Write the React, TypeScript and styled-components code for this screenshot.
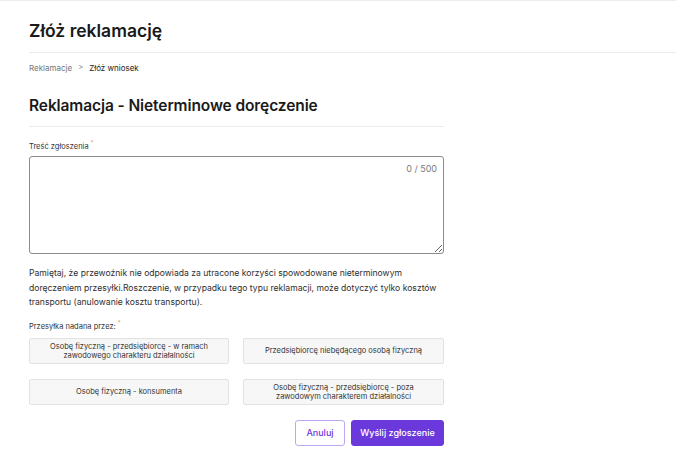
import React from "react";
import styled, { createGlobalStyle } from "styled-components";

const Global = createGlobalStyle`
  html, body { margin: 0; padding: 0; background: #fff; }
  body {
    font-family: "Inter", "Noto Sans", sans-serif;
    color: #1c1c1c;
    border-top: 1px solid #ececec;
  }
  * { box-sizing: border-box; }
`;

const Page = styled.div`
  display: flex;
  flex-direction: column;
`;

const PageTitle = styled.h1`
  margin: 18px 0 0 29px;
  font-size: 17.5px;
  line-height: 24px;
  font-weight: 600;
  color: #1a1a1a;
`;

const Divider = styled.hr<{ $width?: number; $top: number; $left?: number }>`
  margin: ${(p) => p.$top}px 0 0 ${(p) => (p.$left ?? 29)}px;
  border: none;
  border-top: 1px solid #ececec;
  height: 0;
  width: ${(p) => (p.$width ? `${p.$width}px` : "auto")};
`;

const Crumbs = styled.nav`
  margin: 9px 0 0 29px;
  display: flex;
  align-items: center;
  gap: 6px;
  font-size: 8px;
  line-height: 12px;
`;

const Crumb = styled.span<{ $active?: boolean }>`
  color: ${(p) => (p.$active ? "#222" : "#777")};
`;

const Sep = styled.span`
  color: #888;
  font-size: 7.5px;
`;

const Content = styled.main`
  width: 415px;
  margin-left: 29px;
  display: flex;
  flex-direction: column;
`;

const SectionTitle = styled.h2`
  margin: 21px 0 0 0;
  font-size: 15.5px;
  line-height: 22px;
  font-weight: 600;
  letter-spacing: -0.1px;
  color: #1a1a1a;
`;

const Label = styled.label<{ $top: number }>`
  margin-top: ${(p) => p.$top}px;
  font-size: 7.5px;
  line-height: 12px;
  color: #333;
  display: block;
`;

const Star = styled.sup`
  color: #f08a5d;
  font-size: 6px;
  margin-left: 2px;
  vertical-align: 4px;
  line-height: 0;
`;

const AreaWrap = styled.div`
  position: relative;
  margin-top: 3px;
  height: 98px;
  display: flex;
`;

const Area = styled.textarea`
  flex: 1;
  border: 1px solid #8c8c8c;
  border-radius: 3px;
  resize: vertical;
  font-family: inherit;
  font-size: 10px;
  padding: 8px 10px;
  outline: none;
`;

const Counter = styled.span`
  position: absolute;
  top: 7px;
  right: 7px;
  font-size: 9px;
  line-height: 12px;
  color: #7a7a7a;
`;

const Note = styled.p`
  margin: 12px 0 0 0;
  font-size: 8.6px;
  line-height: 14.5px;
  color: #2e2e2e;
`;

const Options = styled.div`
  margin-top: 5px;
  display: grid;
  grid-template-columns: 200px 201px;
  column-gap: 14px;
  row-gap: 15px;
`;

const Option = styled.button`
  height: 26px;
  background: #f7f7f7;
  border: 1px solid #e2e2e2;
  border-radius: 2px;
  font-family: inherit;
  font-size: 7.5px;
  line-height: 9px;
  color: #333;
  padding: 0 16px;
  text-align: center;
  cursor: pointer;
`;

const Actions = styled.div`
  margin-top: 15px;
  display: flex;
  justify-content: flex-end;
  gap: 6px;
`;

const Btn = styled.button<{ $primary?: boolean }>`
  height: 26px;
  border-radius: 3px;
  font-family: inherit;
  font-size: 9px;
  font-weight: 500;
  cursor: pointer;
  padding: 0;
  width: ${(p) => (p.$primary ? "93px" : "50px")};
  background: ${(p) => (p.$primary ? "#6a38db" : "#fff")};
  color: ${(p) => (p.$primary ? "#fff" : "#6a38db")};
  border: 1px solid ${(p) => (p.$primary ? "#6a38db" : "#bda6f3")};
`;

const NOTE =
  "Pamiętaj, że przewoźnik nie odpowiada za utracone korzyści spowodowane nieterminowym doręczeniem przesyłki.Roszczenie, w przypadku tego typu reklamacji, może dotyczyć tylko kosztów transportu (anulowanie kosztu transportu).";

export default function App() {
  const options = [
    "Osobę fizyczną - przedsiębiorcę - w ramach zawodowego charakteru działalności",
    "Przedsiębiorcę niebędącego osobą fizyczną",
    "Osobę fizyczną - konsumenta",
    "Osobę fizyczną - przedsiębiorcę - poza zawodowym charakterem działalności",
  ];
  return (
    <Page>
      <Global />
      <PageTitle>Złóż reklamację</PageTitle>
      <Divider $top={9} />
      <Crumbs>
        <Crumb>Reklamacje</Crumb>
        <Sep>&gt;</Sep>
        <Crumb $active>Złóż wniosek</Crumb>
      </Crumbs>
      <Content>
        <SectionTitle>Reklamacja - Nieterminowe doręczenie</SectionTitle>
        <Divider $top={9} $width={415} $left={0} />
        <Label $top={14}>
          Treść zgłoszenia<Star>*</Star>
        </Label>
        <AreaWrap>
          <Area />
          <Counter>0 / 500</Counter>
        </AreaWrap>
        <Note>{NOTE}</Note>
        <Label $top={11}>
          Przesyłka nadana przez:<Star>*</Star>
        </Label>
        <Options>
          {options.map((o) => (
            <Option key={o}>{o}</Option>
          ))}
        </Options>
        <Actions>
          <Btn>Anuluj</Btn>
          <Btn $primary>Wyślij zgłoszenie</Btn>
        </Actions>
      </Content>
    </Page>
  );
}
